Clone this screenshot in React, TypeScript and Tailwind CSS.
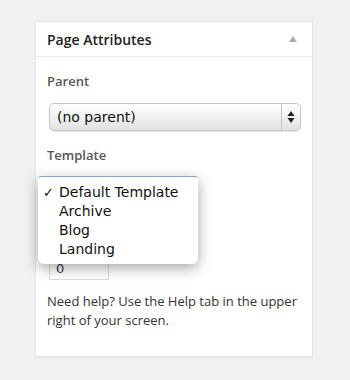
const TEMPLATES = ['Default Template', 'Archive', 'Blog', 'Landing'];

function UpDownArrows() {
  return (
    <svg width="8" height="14" viewBox="0 0 8 14" className="text-[#222]">
      <path d="M4 1 L7.5 6 L0.5 6 Z" fill="currentColor" />
      <path d="M4 13 L7.5 8 L0.5 8 Z" fill="currentColor" />
    </svg>
  );
}

export default function App() {
  return (
    <div className="min-h-[380px] w-[350px] bg-[#f1f1f1] pt-[21px] pl-[35px]" style={{ fontFamily: '"Open Sans", sans-serif' }}>
      {/* Page Attributes meta box */}
      <div className="w-[278px] border border-[#e5e5e5] bg-white shadow-[0_1px_1px_rgba(0,0,0,0.04)]">
        <div className="flex h-[35px] items-center justify-between border-b border-[#eeeeee] pl-[11px] pr-[14px]">
          <h3 className="text-[14px] font-semibold text-[#222]">Page Attributes</h3>
          <svg width="10" height="8" viewBox="0 0 10 8">
            <path d="M5 1 L9 7 L1 7 Z" fill="#aaa" />
          </svg>
        </div>

        <div className="relative px-[11px] pt-[14px] pb-[26px]">
          <p className="text-[13px] font-semibold leading-[20px] text-[#555]">Parent</p>

          <div className="mt-[12px] ml-[2px] flex h-[28px] w-[252px] items-center overflow-hidden rounded-[5px] border border-[#c8c8c8] bg-gradient-to-b from-[#ffffff] via-[#f1f1f1] to-[#e2e2e2] shadow-[0_1px_1px_rgba(0,0,0,0.1)]">
            <span className="flex-1 pl-[7px] text-[14px] text-[#111]" style={{ fontFamily: '"DejaVu Sans", sans-serif' }}>
              (no parent)
            </span>
            <span className="flex h-full w-[19px] items-center justify-center border-l border-[#c4c4c4]">
              <UpDownArrows />
            </span>
          </div>

          <p className="mt-[14px] text-[13px] font-semibold leading-[20px] text-[#555]">Template</p>

          {/* Template select (behind the open menu) */}
          <div className="mt-[13px] ml-[2px] h-[28px] w-[147px] rounded-[5px] border border-[#7aa7d6] bg-white" />

          {/* Order label sits hidden under the open menu */}
          <div className="mt-[15px] h-[20px]" />
          <div className="mt-[11px] ml-[2px] flex h-[28px] w-[60px] items-start border border-[#dddddd] bg-white pt-[8px] pl-[6px] text-[13px] leading-[16px] text-[#333]" style={{ fontFamily: '"DejaVu Sans", sans-serif' }}>
            0
          </div>

          <p className="mt-[12px] text-[13px] leading-[19px] text-[#333]">
            Need help? Use the Help tab in the upper right of your screen.
          </p>

          {/* Open select menu */}
          <ul
            className="absolute left-[2px] top-[119px] w-[160px] rounded-b-[6px] rounded-t-[3px] border-t border-[#7aa7d6] bg-white pt-[6px] pb-[5px] shadow-[0_4px_14px_rgba(0,0,0,0.35)]"
            style={{ fontFamily: '"DejaVu Sans", sans-serif' }}
          >
            {TEMPLATES.map((name, i) => (
              <li key={name} className="relative pl-[21px] text-[14px] leading-[19px] text-[#111]">
                {i === 0 && <span className="absolute left-[5px] top-0 text-[13px]">✓</span>}
                {name}
              </li>
            ))}
          </ul>
        </div>
      </div>
    </div>
  );
}
